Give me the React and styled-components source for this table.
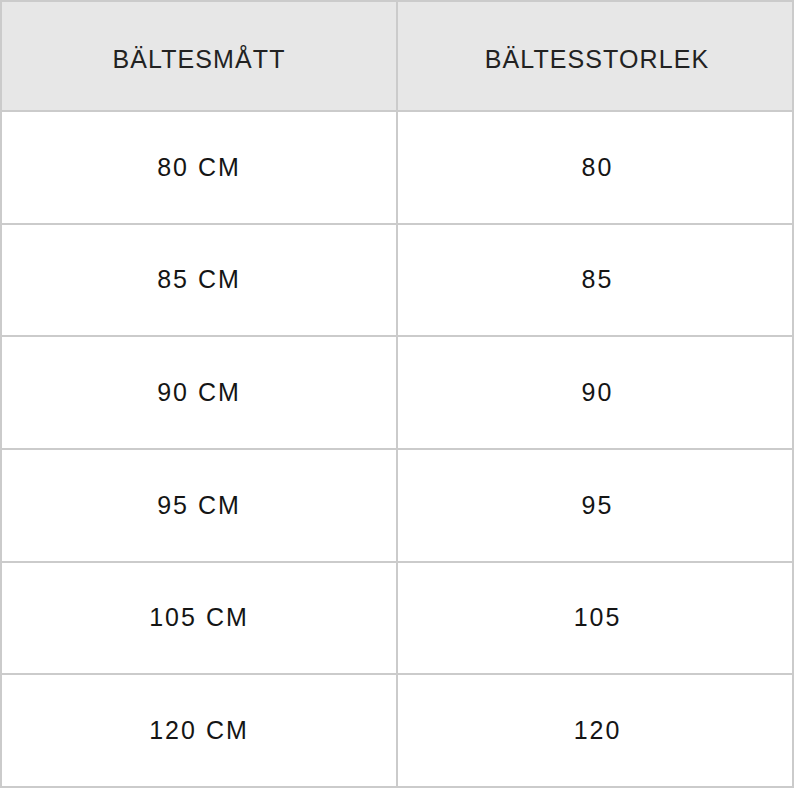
import React from "react";
import styled, { createGlobalStyle } from "styled-components";

const Global = createGlobalStyle`
  html, body { margin: 0; padding: 0; background: #fff; }
  body { font-family: "Liberation Sans", Arial, sans-serif; }
`;

const Table = styled.div`
  width: 794px;
  height: 788px;
  box-sizing: border-box;
  display: grid;
  grid-template-columns: 1fr 1fr;
  grid-template-rows: 108px repeat(6, 1fr);
  gap: 2px;
  padding: 2px;
  background: #cbcbcb;
  font-family: "Liberation Sans", Arial, sans-serif;
`;

const HeadCell = styled.div`
  display: flex;
  align-items: center;
  justify-content: center;
  padding-top: 7px;
  padding-left: ${(p) => (p.$right ? "4px" : "0")};
  box-sizing: border-box;
  background: #e7e7e7;
  font-size: 25px;
  letter-spacing: 1.1px;
  color: #222;
`;

const Cell = styled.div`
  display: flex;
  align-items: center;
  justify-content: center;
  padding-left: ${(p) => (p.$right ? "5px" : "0")};
  box-sizing: border-box;
  background: #fff;
  font-size: 25px;
  letter-spacing: 2px;
  color: #151515;
`;

const rows = [
  ["80 CM", "80"],
  ["85 CM", "85"],
  ["90 CM", "90"],
  ["95 CM", "95"],
  ["105 CM", "105"],
  ["120 CM", "120"],
];

export default function App() {
  return (
    <>
      <Global />
      <Table>
        <HeadCell>BÄLTESMÅTT</HeadCell>
        <HeadCell $right>BÄLTESSTORLEK</HeadCell>
        {rows.map(([a, b]) => (
          <React.Fragment key={a}>
            <Cell>{a}</Cell>
            <Cell $right>{b}</Cell>
          </React.Fragment>
        ))}
      </Table>
    </>
  );
}
